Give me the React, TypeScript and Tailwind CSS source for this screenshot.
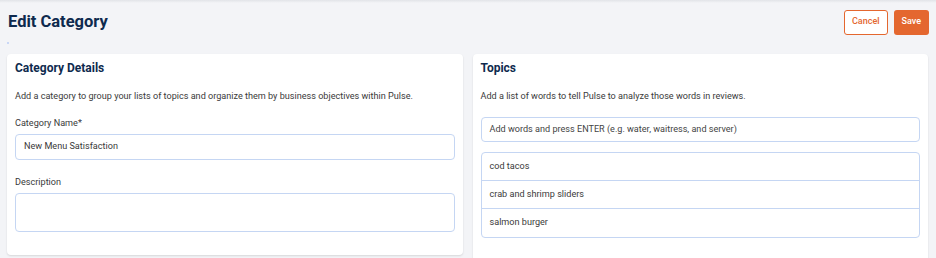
import React from 'react'

const TOPICS = ['cod tacos', 'crab and shrimp sliders', 'salmon burger']

function Card({ title, children }: { title: string; children: React.ReactNode }) {
  return (
    <section className="bg-white rounded-[4px] shadow-[0_1px_2px_rgba(0,0,0,0.12)] px-2 pt-[6px] pb-[23px]">
      <h2 className="text-[12px] leading-4 font-bold text-[#0e2a4e]">{title}</h2>
      {children}
    </section>
  )
}

export default function App() {
  return (
    <div className="h-[258px] overflow-hidden bg-[#f3f4f7] text-[#3a3a3a]" style={{ fontFamily: 'Roboto, "Liberation Sans", sans-serif' }}>
      <div className="h-[3px] bg-gradient-to-b from-[#e2e4e8] to-[#f3f4f7]" />
      <header className="flex items-center justify-between pl-2 pr-[7px] pt-[5px] h-[33px]">
        <h1 className="text-[16.5px] leading-5 font-bold text-[#0e2a4e]">Edit Category</h1>
        <div className="flex gap-[6px]">
          <button className="h-[25px] px-[7px] rounded-[3px] border border-[#e4672f] bg-white text-[9px] font-medium text-[#e4672f]">
            Cancel
          </button>
          <button className="h-[25px] px-[8px] rounded-[3px] bg-[#e4672f] text-[9px] font-medium text-white">
            Save
          </button>
        </div>
      </header>
      <div className="ml-[7px] mt-[6px] w-[2px] h-[2px] bg-[#c9d7f6]" />
      <main className="grid grid-cols-2 gap-[10px] items-start pl-[7px] pr-[8px] mt-[10px]">
        <Card title="Category Details">
          <p className="mt-[14px] text-[9.1px] leading-3">
            Add a category to group your lists of topics and organize them by business objectives within Pulse.
          </p>
          <label className="block mt-[15px] text-[9.1px] leading-3">Category Name*</label>
          <div className="mt-[5px] h-[26px] flex items-center px-2 rounded-[4px] border border-[#c5d6f3] text-[9.1px]">
            New Menu Satisfaction
          </div>
          <label className="block mt-[16px] text-[9.1px] leading-3">Description</label>
          <div className="mt-[5px] h-[39px] rounded-[4px] border border-[#c5d6f3]" />
        </Card>
        <Card title="Topics">
          <p className="mt-[14px] text-[9.1px] leading-3">Add a list of words to tell Pulse to analyze those words in reviews.</p>
          <div className="mt-[15px] h-[25px] flex items-center px-2 rounded-[4px] border border-[#c5d6f3] text-[9.1px] text-[#444]">
            Add words and press ENTER (e.g. water, waitress, and server)
          </div>
          <ul className="mt-[10px] rounded-[4px] border border-[#c5d6f3]">
            {TOPICS.map(t => (
              <li key={t} className="h-[28px] flex items-center px-2 text-[9.1px] border-b border-[#c5d6f3] last:border-b-0">
                {t}
              </li>
            ))}
          </ul>
        </Card>
      </main>
    </div>
  )
}
